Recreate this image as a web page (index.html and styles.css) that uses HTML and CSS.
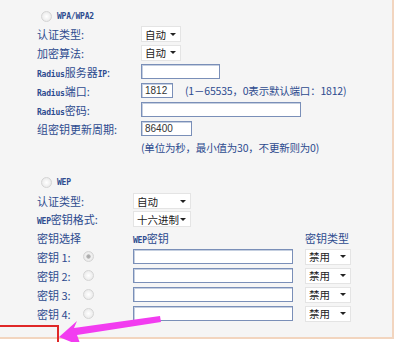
FILE: index.html
```html
<!DOCTYPE html>
<html>
<head>
<meta charset="utf-8">
<link rel="stylesheet" href="styles.css">
</head>
<body>
<div class="page">
  <div class="form">
    <div class="row h17 radio-row"><span class="radio"></span><span class="latin">WPA/WPA2</span></div>
    <div class="row h18"><span class="label">认证类型:</span><span class="select w40"><span>自动</span><i class="caret"></i></span></div>
    <div class="row h19"><span class="label">加密算法:</span><span class="select w40"><span>自动</span><i class="caret"></i></span></div>
    <div class="row h19"><span class="label"><span class="latin">Radius</span>服务器<span class="latin">IP</span>:</span><span class="input w78"></span></div>
    <div class="row h19"><span class="label"><span class="latin">Radius</span>端口:</span><span class="input w31 val">1812</span><span class="note port">(1－65535，0表示默认端口：1812)</span></div>
    <div class="row h19"><span class="label"><span class="latin">Radius</span>密码:</span><span class="input w160"></span></div>
    <div class="row h19"><span class="label">组密钥更新周期:</span><span class="input w51 val">86400</span></div>
    <div class="row h18"><span class="note period">(单位为秒，最小值为30，不更新则为0)</span></div>
    <div class="spacer"></div>
    <div class="row h19 radio-row"><span class="radio"></span><span class="latin">WEP</span></div>
    <div class="row h18"><span class="label wep">认证类型:</span><span class="select w58"><span>自动</span><i class="caret"></i></span></div>
    <div class="row h18"><span class="label wep"><span class="latin">WEP</span>密钥格式:</span><span class="select w58"><span>十六进制</span><i class="caret"></i></span></div>
    <div class="row h19"><span class="label wep">密钥选择</span><span class="col-key"><span class="latin">WEP</span>密钥</span><span class="plain">密钥类型</span></div>
    <div class="row h19"><span class="key-label">密钥 1:</span><span class="radio checked"></span><span class="input w160 key"></span><span class="select w46"><span>禁用</span><i class="caret"></i></span></div>
    <div class="row h19"><span class="key-label">密钥 2:</span><span class="radio"></span><span class="input w160 key"></span><span class="select w46"><span>禁用</span><i class="caret"></i></span></div>
    <div class="row h19"><span class="key-label">密钥 3:</span><span class="radio"></span><span class="input w160 key"></span><span class="select w46"><span>禁用</span><i class="caret"></i></span></div>
    <div class="row h19"><span class="key-label">密钥 4:</span><span class="radio"></span><span class="input w160 key"></span><span class="select w46"><span>禁用</span><i class="caret"></i></span></div>
  </div>
</div>
<div class="highlight"></div>
<svg class="arrow" width="403" height="342" viewBox="0 0 403 342">
  <polygon points="59,337 77,321 74,328 160,316 161,322 77,335 81,346" fill="#f23cf0"/>
</svg>
</body>
</html>
```
FILE: styles.css
```css
html, body {
  margin: 0;
  padding: 0;
  background: #ffffff;
}
body {
  position: relative;
  width: 403px;
  height: 342px;
  overflow: hidden;
  font-family: "Noto Sans CJK SC", "DejaVu Sans", sans-serif;
  font-size: 11px;
  color: #2d4b8f;
}
.page {
  width: 392px;
  height: 337px;
  background: #f5f5f5;
  border-right: 2px solid #f2d5bf;
  border-bottom: 2px solid #f2d5bf;
}
.form {
  padding-top: 8px;
  padding-left: 37px;
  display: flex;
  flex-direction: column;
}
.row {
  display: flex;
  align-items: center;
  white-space: nowrap;
}
.h17 { height: 17px; }
.h18 { height: 18px; }
.h19 { height: 19px; }
.spacer { height: 17px; }
.latin {
  font-family: "DejaVu Sans Mono", monospace;
  font-size: 8px;
  font-weight: bold;
  letter-spacing: -0.2px;
}
.radio-row {
  padding-left: 4px;
}
.radio-row .radio {
  margin-right: 5px;
}
.radio {
  width: 9px;
  height: 9px;
  border-radius: 50%;
  border: 1px solid #d4d4d4;
  background: radial-gradient(circle at 50% 50%, #ffffff 0, #f0f0f0 55%, #e2e2e2 100%);
  box-sizing: content-box;
  flex: none;
}
.radio.checked {
  background: radial-gradient(circle at 50% 50%, #a8a8a8 0, #b4b4b4 28%, #f2f2f2 40%, #e2e2e2 100%);
}
.label {
  width: 104px;
  flex: none;
}
.label.wep {
  width: 96px;
}
.select {
  display: flex;
  align-items: center;
  justify-content: space-between;
  height: 16px;
  box-sizing: border-box;
  background: #ffffff;
  border: 1px solid #e4e4e4;
  color: #222;
  font-size: 10.5px;
  padding: 0 4px 0 3px;
  flex: none;
}
.caret {
  width: 0;
  height: 0;
  border-left: 3px solid transparent;
  border-right: 3px solid transparent;
  border-top: 3px solid #222;
  flex: none;
}
.w40 { width: 40px; }
.w46 { width: 46px; }
.w58 { width: 58px; }
.w31 { width: 32px; }
.w51 { width: 51px; }
.w78 { width: 79px; }
.w160 { width: 160px; }
.input {
  height: 15px;
  box-sizing: border-box;
  background: #ffffff;
  border: 1px solid #7a8fb8;
  box-shadow: inset 1px 1px 0 #c5cfe0;
  flex: none;
}
.input.val {
  font-family: "Liberation Sans", sans-serif;
  font-size: 10px;
  color: #333;
  display: flex;
  align-items: center;
  padding-left: 3px;
}
.note {
  font-size: 10.5px;
  letter-spacing: -0.2px;
}
.note.port {
  margin-left: 12px;
}
.note.period {
  margin-left: 104px;
}
.col-key {
  width: 172px;
  flex: none;
}
.plain {
  font-family: "Noto Sans CJK SC", sans-serif;
}
.key-label {
  width: 46px;
  flex: none;
}
.row .radio + .input.key {
  margin-left: 39px;
}
.input.key {
  margin-right: 12px;
}
.highlight {
  position: absolute;
  left: -2px;
  top: 325px;
  width: 61px;
  height: 20px;
  border: 2px solid #e02828;
  box-sizing: border-box;
}
.arrow {
  position: absolute;
  left: 0;
  top: 0;
  pointer-events: none;
}
```
